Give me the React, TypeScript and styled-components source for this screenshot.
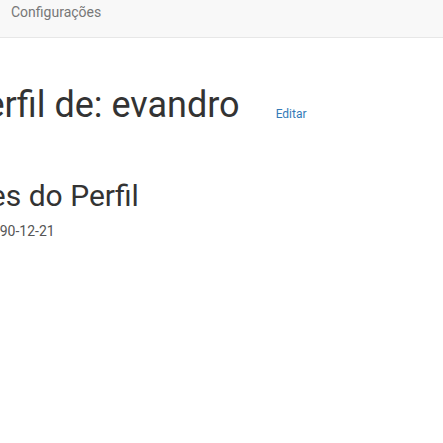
import React from "react";
import styled, { createGlobalStyle } from "styled-components";

const Global = createGlobalStyle`
  html, body { margin: 0; padding: 0; background: #fff; overflow: hidden; }
  body { font-family: Roboto, "Liberation Sans", sans-serif; color: #333; font-size: 14px; line-height: 20px; }
`;

const NavBar = styled.nav`
  box-sizing: border-box;
  height: 38px;
  background: #f8f8f8;
  border-bottom: 1px solid #e7e7e7;
  padding: 2px 0 0 11px;
`;

const Brand = styled.span`
  font-size: 14px;
  line-height: 20px;
  color: #777;
`;

const Main = styled.main`
  display: flex;
  flex-direction: column;
`;

const TitleRow = styled.div`
  display: flex;
  align-items: baseline;
  gap: 36px;
  margin: 48px 0 0 -37px;
`;

const Title = styled.h1`
  margin: 0;
  font-size: 36px;
  line-height: 1.1;
  font-weight: 400;
  color: #333;
`;

const EditLink = styled.a`
  font-size: 12px;
  color: #337ab7;
  text-decoration: none;
  position: relative;
  top: 1px;
`;

const SectionTitle = styled.h2<{ $shift: number }>`
  margin: 53px 0 0 ${(p) => p.$shift}px;
  font-size: 30px;
  line-height: 1.1;
  font-weight: 400;
  color: #333;
`;

const Value = styled.p<{ $shift: number }>`
  margin: 9px 0 0 ${(p) => p.$shift}px;
  font-size: 14px;
  line-height: 20px;
  color: #555;
`;

export default function App() {
  return (
    <>
      <Global />
      <NavBar>
        <Brand>Configurações</Brand>
      </NavBar>
      <Main>
        <TitleRow>
          <Title>Perfil de: evandro</Title>
          <EditLink href="#">Editar</EditLink>
        </TitleRow>
        <SectionTitle $shift={-148}>Informações do Perfil</SectionTitle>
        <Value $shift={-16}>1990-12-21</Value>
      </Main>
    </>
  );
}
